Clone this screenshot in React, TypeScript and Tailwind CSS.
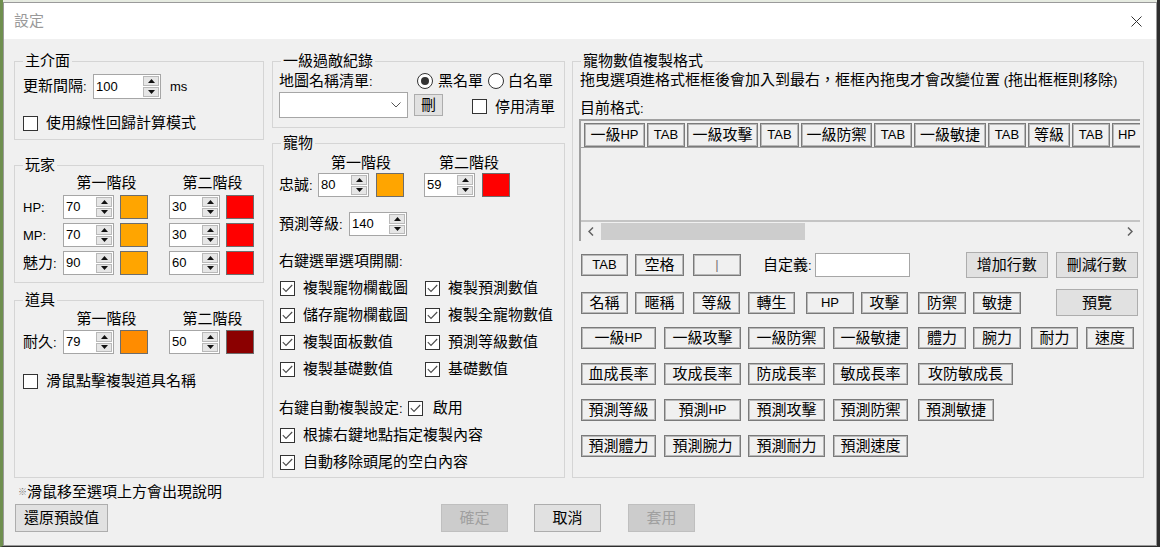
import type { ReactNode } from 'react'

// ASCII runs are set a bit smaller than the CJK glyphs, like the WinForms fallback font
const asciiRun = /([\x20-\x7e]+)/

function T({ children }: { children: string }) {
  return (
    <>
      {children.split(asciiRun).map((part, i) =>
        i % 2 === 1 ? (
          <span key={i} className="text-[13px]">
            {part}
          </span>
        ) : (
          part
        )
      )}
    </>
  )
}

function Group({
  title,
  className,
  children,
}: {
  title: string
  className: string
  children: ReactNode
}) {
  return (
    <div className={`relative border border-[#d5d5d5] ${className}`}>
      <span className="absolute -top-[11px] left-[8px] bg-[#f0f0f0] px-[2px] leading-[20px]">
        <T>{title}</T>
      </span>
      {children}
    </div>
  )
}

function Arrow({ up }: { up?: boolean }) {
  return (
    <span className="flex flex-1 items-center justify-center border border-[#b9b9b9] bg-[#e6e6e6]">
      <svg width="7" height="4" viewBox="0 0 7 4">
        <path d={up ? 'M0 4 L3.5 0 L7 4 Z' : 'M0 0 L3.5 4 L7 0 Z'} fill="#111" />
      </svg>
    </span>
  )
}

function NumBox({ value, className }: { value: string; className: string }) {
  return (
    <div className={`flex border border-[#a6a6a6] bg-white ${className}`}>
      <span className="flex flex-1 items-center pl-[2px] text-[13px]">{value}</span>
      <div className="flex w-[18px] flex-col gap-px p-px">
        <Arrow up />
        <Arrow />
      </div>
    </div>
  )
}

function Swatch({ className }: { className: string }) {
  return <span className={`h-[24px] w-[28px] border border-[#6d6d6d] ${className}`} />
}

function Box({ checked }: { checked?: boolean }) {
  return (
    <span className="flex h-[15px] w-[15px] shrink-0 items-center justify-center border border-[#333] bg-white">
      {checked && (
        <svg width="11" height="9" viewBox="0 0 11 9">
          <path d="M0.8 4.2 L4 7.4 L10.2 1" fill="none" stroke="#4a4a4a" strokeWidth="1.1" />
        </svg>
      )}
    </span>
  )
}

function Check({
  label,
  checked,
  className = '',
}: {
  label: string
  checked?: boolean
  className?: string
}) {
  return (
    <div className={`flex h-[20px] items-center ${className}`}>
      <Box checked={checked} />
      <span className="ml-[8px] whitespace-nowrap">
        <T>{label}</T>
      </span>
    </div>
  )
}

function Radio({ checked, className = '' }: { checked?: boolean; className?: string }) {
  return (
    <span
      className={`flex h-[16px] w-[16px] items-center justify-center rounded-full border border-[#333] bg-white ${className}`}
    >
      {checked && <span className="h-[8px] w-[8px] rounded-full bg-[#333]" />}
    </span>
  )
}

function Btn({
  children,
  className,
  disabled,
}: {
  children: string
  className: string
  disabled?: boolean
}) {
  return (
    <button
      className={`flex items-center justify-center border ${
        disabled ? 'border-[#bfbfbf] bg-[#cccccc] text-[#a0a0a0]' : 'border-[#adadad] bg-[#e1e1e1]'
      } ${className}`}
    >
      <T>{children}</T>
    </button>
  )
}

function Chip({ text, className }: { text: string; className: string }) {
  return (
    <span
      className={`flex shrink-0 items-center justify-center whitespace-nowrap border border-[#7a7a7a] shadow-[inset_1px_1px_0_#b8b8b8,inset_-1px_-1px_0_#b8b8b8] ${className}`}
    >
      <T>{text}</T>
    </span>
  )
}

type ChipDef = [string, string]

// chips already dropped into the format strip
const formatChips: ChipDef[] = [
  ['一級HP', 'w-[61px]'],
  ['TAB', 'w-[38px]'],
  ['一級攻擊', 'w-[71px]'],
  ['TAB', 'w-[39px]'],
  ['一級防禦', 'w-[71px]'],
  ['TAB', 'w-[38px]'],
  ['一級敏捷', 'w-[72px]'],
  ['TAB', 'w-[38px]'],
  ['等級', 'w-[42px]'],
  ['TAB', 'w-[38px]'],
  ['HP', 'w-[30px]'],
]

const row2: ChipDef[] = [
  ['名稱', 'w-[47px]'],
  ['暱稱', 'ml-[7px] w-[49px]'],
  ['等級', 'ml-[9px] w-[47px]'],
  ['轉生', 'ml-[8px] w-[47px]'],
  ['HP', 'ml-[11px] w-[48px]'],
  ['攻擊', 'ml-[7px] w-[47px]'],
  ['防禦', 'ml-[10px] w-[48px]'],
  ['敏捷', 'ml-[7px] w-[48px]'],
]

const row3: ChipDef[] = [
  ['一級HP', 'w-[75px]'],
  ['一級攻擊', 'ml-[8px] w-[77px]'],
  ['一級防禦', 'ml-[7px] w-[77px]'],
  ['一級敏捷', 'ml-[8px] w-[75px]'],
  ['體力', 'ml-[10px] w-[48px]'],
  ['腕力', 'ml-[7px] w-[48px]'],
  ['耐力', 'ml-[10px] w-[47px]'],
  ['速度', 'ml-[8px] w-[48px]'],
]

const row4: ChipDef[] = [
  ['血成長率', 'w-[75px]'],
  ['攻成長率', 'ml-[8px] w-[77px]'],
  ['防成長率', 'ml-[7px] w-[77px]'],
  ['敏成長率', 'ml-[8px] w-[75px]'],
  ['攻防敏成長', 'ml-[10px] w-[95px]'],
]

const row5: ChipDef[] = [
  ['預測等級', 'w-[75px]'],
  ['預測HP', 'ml-[8px] w-[77px]'],
  ['預測攻擊', 'ml-[7px] w-[77px]'],
  ['預測防禦', 'ml-[8px] w-[75px]'],
  ['預測敏捷', 'ml-[10px] w-[76px]'],
]

const row6: ChipDef[] = [
  ['預測體力', 'w-[75px]'],
  ['預測腕力', 'ml-[8px] w-[77px]'],
  ['預測耐力', 'ml-[7px] w-[77px]'],
  ['預測速度', 'ml-[8px] w-[75px]'],
]

function ChipRow({ chips, className }: { chips: ChipDef[]; className: string }) {
  return (
    <div className={`flex ${className}`}>
      {chips.map(([text, cls], i) => (
        <Chip key={i} text={text} className={`h-[22px] ${cls}`} />
      ))}
    </div>
  )
}

function StageHeading() {
  return (
    <div className="flex h-[20px]">
      <span className="ml-[41px] w-[85px] text-center">第一階段</span>
      <span className="ml-[21px] w-[85px] text-center">第二階段</span>
    </div>
  )
}

function StageRow({
  label,
  a,
  b,
  colorA,
  colorB,
  className = '',
}: {
  label: string
  a: string
  b: string
  colorA: string
  colorB: string
  className?: string
}) {
  return (
    <div className={`flex h-[24px] items-center ${className}`}>
      <span className="w-[40px]">
        <T>{label}</T>
      </span>
      <NumBox value={a} className="h-[24px] w-[51px]" />
      <Swatch className={`ml-[6px] ${colorA}`} />
      <NumBox value={b} className="ml-[21px] h-[24px] w-[51px]" />
      <Swatch className={`ml-[6px] ${colorB}`} />
    </div>
  )
}

export default function App() {
  return (
    <div className="h-[547px] w-[1160px] overflow-hidden border-b border-l-[3px] border-r-[3px] border-b-[#2e2e2e] border-l-[#6f8f4f] border-r-[#2e2e2e] bg-[#e6ebe1] pt-[2px] font-['Liberation_Sans','Noto_Sans_CJK_TC',sans-serif] text-[15px] leading-[20px] text-black">
      <div className="flex h-[544px] w-[1154px] flex-col border border-[#9a9a9a] bg-[#f0f0f0]">
        {/* title bar */}
        <div className="flex h-[36px] shrink-0 items-center justify-between bg-white pl-[10px] pr-[14px]">
          <span className="text-[#999]">設定</span>
          <svg width="11" height="11" viewBox="0 0 11 11">
            <path d="M0.5 0.5 L10.5 10.5 M10.5 0.5 L0.5 10.5" stroke="#333" strokeWidth="1" />
          </svg>
        </div>

        <div className="flex flex-1 flex-col pl-[10px] pt-[22px]">
          <div className="flex">
            {/* left column */}
            <div className="flex w-[250px] flex-col">
              <Group title="主介面" className="h-[79px] pl-[8px] pt-[12px]">
                <div className="flex h-[25px] items-center">
                  <span className="w-[70px]">
                    <T>更新間隔:</T>
                  </span>
                  <NumBox value="100" className="h-[25px] w-[68px]" />
                  <span className="ml-[9px] text-[13px]">ms</span>
                </div>
                <Check label="使用線性回歸計算模式" className="mt-[14px]" />
              </Group>

              <Group title="玩家" className="mt-[25px] h-[118px] pl-[8px] pt-[7px]">
                <StageHeading />
                <StageRow label="HP:" a="70" b="30" colorA="bg-[#ffa500]" colorB="bg-[#ff0000]" className="mt-[2px]" />
                <StageRow label="MP:" a="70" b="30" colorA="bg-[#ffa500]" colorB="bg-[#ff0000]" className="mt-[4px]" />
                <StageRow label="魅力:" a="90" b="60" colorA="bg-[#ffa500]" colorB="bg-[#ff0000]" className="mt-[4px]" />
              </Group>

              <Group title="道具" className="mt-[17px] h-[178px] pl-[8px] pt-[8px]">
                <StageHeading />
                <StageRow label="耐久:" a="79" b="50" colorA="bg-[#ff8c00]" colorB="bg-[#8b0000]" className="mt-[1px]" />
                <Check label="滑鼠點擊複製道具名稱" className="mt-[17px]" />
              </Group>
            </div>

            {/* middle column */}
            <div className="ml-[8px] flex w-[293px] flex-col">
              <Group title="一級過敵紀錄" className="h-[67px] pl-[6px] pt-[9px]">
                <div className="flex h-[20px] items-center">
                  <span className="w-[138px]">
                    <T>地圖名稱清單:</T>
                  </span>
                  <Radio checked />
                  <span className="ml-[5px]">黑名單</span>
                  <Radio className="ml-[5px]" />
                  <span className="ml-[4px]">白名單</span>
                </div>
                <div className="mt-[1px] flex h-[26px] items-center">
                  <div className="flex h-[26px] w-[129px] items-center justify-end border border-[#a6a6a6] bg-white pr-[6px]">
                    <svg width="10" height="6" viewBox="0 0 10 6">
                      <path d="M0.5 0.5 L5 5 L9.5 0.5" fill="none" stroke="#555" strokeWidth="1" />
                    </svg>
                  </div>
                  <Btn className="ml-[6px] h-[22px] w-[29px]">刪</Btn>
                  <Check label="停用清單" className="ml-[29px] mt-[3px]" />
                </div>
              </Group>

              <Group title="寵物" className="mt-[15px] h-[335px] pl-[6px] pt-[9px]">
                <div className="flex h-[20px]">
                  <span className="ml-[39px] w-[86px] text-center">第一階段</span>
                  <span className="ml-[22px] w-[86px] text-center">第二階段</span>
                </div>
                <div className="flex h-[24px] items-center">
                  <span className="w-[39px]">
                    <T>忠誠:</T>
                  </span>
                  <NumBox value="80" className="h-[24px] w-[51px]" />
                  <Swatch className="ml-[7px] bg-[#ffa500]" />
                  <NumBox value="59" className="ml-[20px] h-[24px] w-[51px]" />
                  <Swatch className="ml-[7px] bg-[#ff0000]" />
                </div>
                <div className="mt-[15px] flex h-[24px] items-center">
                  <span className="w-[70px]">
                    <T>預測等級:</T>
                  </span>
                  <NumBox value="140" className="h-[24px] w-[58px]" />
                </div>
                <div className="mt-[15px] h-[20px]">
                  <T>右鍵選單選項開關:</T>
                </div>
                <div className="mt-[7px] grid grid-cols-[145px_1fr] gap-y-[7px]">
                  <Check checked label="複製寵物欄截圖" className="ml-[1px]" />
                  <Check checked label="複製預測數值" className="ml-[1px]" />
                  <Check checked label="儲存寵物欄截圖" className="ml-[1px]" />
                  <Check checked label="複製全寵物數值" className="ml-[1px]" />
                  <Check checked label="複製面板數值" className="ml-[1px]" />
                  <Check checked label="預測等級數值" className="ml-[1px]" />
                  <Check checked label="複製基礎數值" className="ml-[1px]" />
                  <Check checked label="基礎數值" className="ml-[1px]" />
                </div>
                <div className="mt-[19px] flex h-[20px] items-center">
                  <span>
                    <T>右鍵自動複製設定:</T>
                  </span>
                  <span className="ml-[5px]">
                    <Box checked />
                  </span>
                  <span className="ml-[10px]">啟用</span>
                </div>
                <Check checked label="根據右鍵地點指定複製內容" className="ml-[1px] mt-[7px]" />
                <Check checked label="自動移除頭尾的空白內容" className="ml-[1px] mt-[7px]" />
              </Group>
            </div>

            {/* right column */}
            <div className="ml-[7px] w-[572px]">
              <Group title="寵物數值複製格式" className="h-[417px] pl-[7px] pt-[8px]">
                <div className="h-[20px] whitespace-nowrap">
                  <T>拖曳選項進格式框框後會加入到最右，框框內拖曳才會改變位置 (拖出框框則移除)</T>
                </div>
                <div className="mt-[8px] h-[20px]">
                  <T>目前格式:</T>
                </div>

                {/* current format strip with its horizontal scroll bar */}
                <div className="-ml-px mt-[1px] flex h-[122px] w-[561px] flex-col border-l-2 border-t-2 border-[#a0a0a0]">
                  <div className="flex h-[27px] gap-[2px] overflow-hidden border-b border-[#a0a0a0] pl-[3px] pt-[2px]">
                    {formatChips.map(([text, cls], i) => (
                      <Chip key={i} text={text} className={`h-[24px] ${cls}`} />
                    ))}
                  </div>
                  <div className="flex-1 border-b-2 border-[#c4c4c4]" />
                  <div className="flex h-[19px] items-center">
                    <span className="flex w-[20px] justify-center">
                      <svg width="6" height="9" viewBox="0 0 6 9">
                        <path d="M5 0.5 L1 4.5 L5 8.5" fill="none" stroke="#606060" strokeWidth="1.5" />
                      </svg>
                    </span>
                    <span className="h-[17px] w-[204px] bg-[#cdcdcd]" />
                    <span className="flex-1" />
                    <span className="flex w-[20px] justify-center">
                      <svg width="6" height="9" viewBox="0 0 6 9">
                        <path d="M1 0.5 L5 4.5 L1 8.5" fill="none" stroke="#606060" strokeWidth="1.5" />
                      </svg>
                    </span>
                  </div>
                </div>

                <div className="ml-[1px] mt-[11px] flex h-[26px] items-center">
                  <Chip text="TAB" className="h-[22px] w-[47px]" />
                  <Chip text="空格" className="ml-[7px] h-[22px] w-[49px]" />
                  <Chip text="|" className="ml-[9px] h-[22px] w-[48px] text-[#777]" />
                  <span className="ml-[22px]">
                    <T>自定義:</T>
                  </span>
                  <span className="ml-[3px] h-[24px] w-[95px] border border-[#a6a6a6] bg-white" />
                  <Btn className="ml-[56px] h-[26px] w-[82px]">增加行數</Btn>
                  <Btn className="ml-[8px] h-[26px] w-[82px]">刪減行數</Btn>
                </div>
                <div className="ml-[1px] mt-[11px] flex h-[27px] items-center">
                  <ChipRow chips={row2} className="" />
                  <Btn className="ml-[35px] h-[27px] w-[82px]">預覽</Btn>
                </div>
                <ChipRow chips={row3} className="ml-[1px] mt-[11px]" />
                <ChipRow chips={row4} className="ml-[1px] mt-[14px]" />
                <ChipRow chips={row5} className="ml-[1px] mt-[14px]" />
                <ChipRow chips={row6} className="ml-[1px] mt-[14px]" />
              </Group>
            </div>
          </div>

          {/* footer */}
          <div className="ml-[4px] mt-[4px] flex h-[20px] items-center">
            <span className="text-[9px] text-[#777]">※</span>
            <span>滑鼠移至選項上方會出現說明</span>
          </div>
          <div className="ml-[1px] mt-[2px] flex">
            <Btn className="h-[28px] w-[93px]">還原預設值</Btn>
            <Btn disabled className="ml-[333px] h-[28px] w-[67px]">確定</Btn>
            <Btn className="ml-[26px] h-[28px] w-[67px]">取消</Btn>
            <Btn disabled className="ml-[27px] h-[28px] w-[67px]">套用</Btn>
          </div>
        </div>
      </div>
    </div>
  )
}
